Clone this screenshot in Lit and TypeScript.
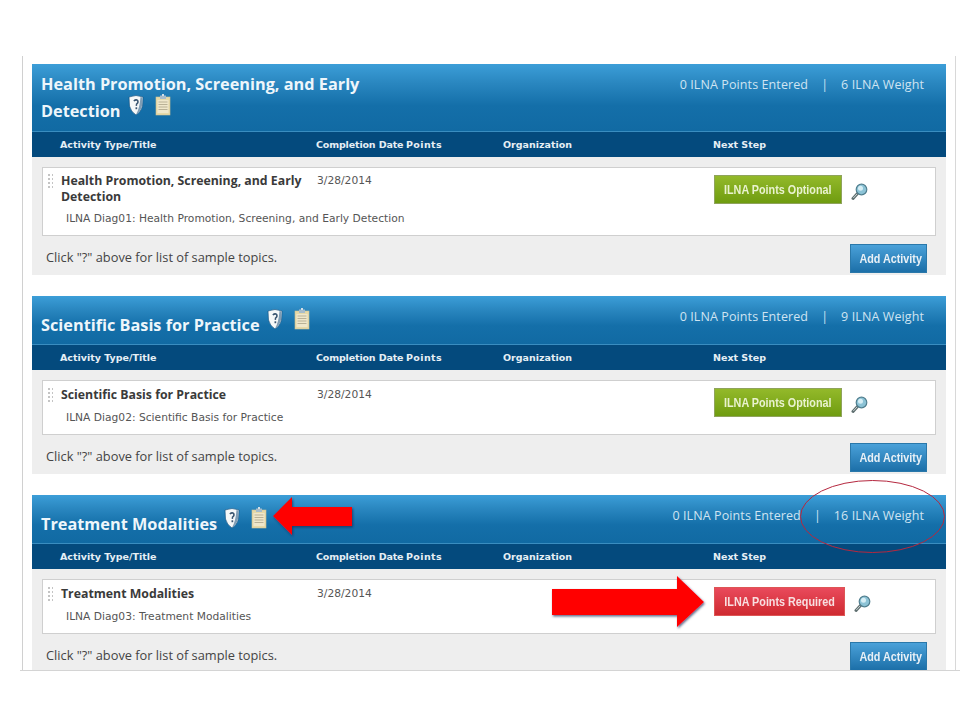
import { LitElement, html, css, svg } from "lit";
import { customElement } from "lit/decorators.js";

type Panel = {
  title: string; code: string; weight: string; multi?: boolean;
  btn: string; red?: boolean;
};

const panels: Panel[] = [
  { title: "Health Promotion, Screening, and Early Detection", code: "ILNA Diag01", weight: "6", multi: true, btn: "ILNA Points Optional" },
  { title: "Scientific Basis for Practice", code: "ILNA Diag02", weight: "9", btn: "ILNA Points Optional" },
  { title: "Treatment Modalities", code: "ILNA Diag03", weight: "16", btn: "ILNA Points Required", red: true },
];

const shield = svg`<svg class="ico" width="16" height="22" viewBox="0 0 16 22">
  <path d="M1 3 Q8 0 15 3 L14.500 12 Q13 18 8 21 Q3 18 1.500 12 Z" fill="#f6f8f8" stroke="#0d4a78" stroke-width=".6"/>
  <path d="M12.500 3 L14.500 3.500 L14 12 Q12.500 17.500 8 20.500 Q11.500 15 12.500 3 Z" fill="#7f9db5"/>
  <path d="M5.800 7 Q8 5 9.700 6.500 Q10.600 8.500 8.600 10 L8.300 11.800" fill="none" stroke="#3a5570" stroke-width="1.500"/>
  <rect x="7.500" y="13.300" width="1.700" height="1.900" fill="#3a5570"/>
</svg>`;

const clip = svg`<svg class="ico clip" width="16" height="22" viewBox="0 0 16 22">
  <rect x="1" y="3" width="14" height="18" fill="#e6d9a8" stroke="#cfc493" stroke-width=".6"/>
  <rect x="2.500" y="6" width="11" height="13" fill="#efe7cb"/>
  <path d="M3.500 8h9M3.500 10.500h9M3.500 13h9M3.500 15.500h9" stroke="#b9b196" stroke-width="1"/>
  <rect x="5" y="1.500" width="6" height="3.500" fill="#a7bccb"/>
  <rect x="7" y="0" width="2" height="2" fill="#d4dfe6"/>
</svg>`;

const lens = svg`<svg class="lens" width="17" height="18" viewBox="0 0 17 18">
  <path d="M6.500 10.500 L2 15.500" stroke="#5f6f70" stroke-width="3" stroke-linecap="round"/>
  <path d="M6 11 L2.300 15" stroke="#c9d2d2" stroke-width="1"/>
  <circle cx="10.500" cy="6.500" r="5.300" fill="#8cc3d6" stroke="#517f8f" stroke-width="1.200"/>
  <circle cx="9.500" cy="5.200" r="2.500" fill="#d6eef5"/>
</svg>`;

@customElement("app-root")
export class AppRoot extends LitElement {
  static styles = css`
    :host { display: block; width: 960px; height: 720px; background: #fff; position: relative; overflow: hidden; }
    .page { padding-top: 56px; }
    .frame {
      margin-left: 22px; width: 923px; height: 606px;
      border-left: 1px solid #d0d0d0; border-right: 1px solid #d8d8d8;
      padding: 8px 0 0 9px; overflow: hidden;
      display: flex; flex-direction: column; gap: 21px;
    }
    .rule { margin-left: 20px; height: 1px; background: #d4d4d4; }
    .panel { width: 914px; flex: none; background: #eeeeee; }
    .head {
      display: flex; justify-content: space-between; align-items: flex-start;
      background: linear-gradient(#3c9ed8 0, #2a87c0 28%, #146fa9 62%, #116aa3 100%);
      border-bottom: 1px solid #3a8dc0; box-sizing: border-box;
      height: 49px; padding: 16px 22px 0 9px; color: #fff;
    }
    .head.multi { height: 68px; padding-top: 7px; }
    .title { font: 700 16.300px/27px "Open Sans", sans-serif; color: #eef6fb; width: 345px; }
    .ico { display: inline-block; vertical-align: -1px; margin: -6px 0 -6px 7px; position: relative; top: -8px; }
    .ico.clip { margin-left: 11px; }
    .stats {
      font: 12.500px/16px "Open Sans", sans-serif; color: #cfe4f2; white-space: pre; letter-spacing: .1px;
      display: flex; gap: 13px; margin-top: -3px;
    }
    .multi .stats { margin-top: 6px; }
    .thead {
      display: grid; grid-template-columns: 256px 90px 97px 210px 1fr;
      padding: 1px 0 0 28px; box-sizing: border-box; height: 25px; align-items: center; white-space: nowrap;
      background: #044a7d; color: #e6eff5;
      font: 700 9.500px/14px "DejaVu Sans", sans-serif;
    }
    .cd { letter-spacing: -.15px; }
    .pts { letter-spacing: .4px; }
    .body { padding: 10px 10px 0 10px; }
    .card {
      background: #fff; border: 1px solid #cfcfcf; box-sizing: border-box;
      display: grid; grid-template-columns: 15px 256px 397px 1fr; grid-template-rows: auto auto;
      padding: 6px 0 8px 3px; min-height: 55px; color: #333;
    }
    .card.multi { padding-top: 5px; }
    .grip {
      grid-row: 1 / span 2; width: 6px; height: 15px;
      background-image: radial-gradient(circle, #c4c4c4 0 1px, transparent 1.200px);
      background-size: 4px 4px; margin-left: 1px;
    }
    .name { font: 700 12.300px/16px "Open Sans", sans-serif; color: #3a3a3a; padding-right: 5px; }
    .date { font: 10.700px/16px "DejaVu Sans", sans-serif; color: #555; }
    .sub {
      grid-column: 2 / span 2; grid-row: 2; margin: 6px 0 0 5px;
      font: 10.700px/16px "DejaVu Sans", sans-serif; color: #555;
    }
    .action { grid-column: 4; grid-row: 1 / span 2; display: flex; align-items: flex-start; margin-top: 1px; }
    .card.multi .action { margin-top: 2px; }
    .btn {
      width: 128px; height: 29px; box-sizing: border-box; display: flex; align-items: center; justify-content: center;
      font: 700 13px/16px "Liberation Sans", sans-serif; white-space: nowrap;
      color: #e9f2cf; border: 1px solid #8fa35c;
      background: linear-gradient(#93b92a, #6f9c10);
    }
    .btn.red { width: 131px; color: #f8dfe0; border-color: #d55; background: linear-gradient(#e94a5c, #cf2a30); }
    .narrow { display: inline-block; transform: scaleX(.83); flex: none; }
    .lens { margin: 8px 0 0 9px; }
    .foot { display: flex; justify-content: space-between; padding: 8px 9px 2px 4px; align-items: center; }
    .hint { font: 12.800px/16px "Open Sans", sans-serif; color: #444; margin-top: -3px; }
    .add {
      width: 77px; height: 29px; box-sizing: border-box; display: flex; align-items: center; justify-content: center; padding-left: 4px;
      font: 700 13px/16px "Liberation Sans", sans-serif; color: #e8f0f6; white-space: nowrap;
      border: 1px solid #2a78aa; background: linear-gradient(#4aa1d9, #1c6fa8);
    }
    .over { position: absolute; left: 0; top: 0; pointer-events: none; }
  `;

  render() {
    return html`
      <div class="page">
        <div class="frame">
          ${panels.map((p) => html`
            <section class="panel">
              <div class="head ${p.multi ? "multi" : ""}">
                <div class="title">${p.title}${shield}${clip}</div>
                <div class="stats"><span>0 ILNA Points Entered</span><span>|</span><span>${p.weight} ILNA Weight</span></div>
              </div>
              <div class="thead">
                <span>Activity Type/Title</span><span class="cd">Completion Date</span><span class="pts">Points</span><span>Organization</span><span>Next Step</span>
              </div>
              <div class="body">
                <div class="card ${p.multi ? "multi" : ""}">
                  <div class="grip"></div>
                  <div class="name">${p.title}</div>
                  <div class="date">3/28/2014</div>
                  <div class="sub">${p.code}: ${p.title}</div>
                  <div class="action">
                    <div class="btn ${p.red ? "red" : ""}"><span class="narrow">${p.btn}</span></div>${lens}
                  </div>
                </div>
                <div class="foot">
                  <span class="hint">Click "?" above for list of sample topics.</span>
                  <span class="add"><span class="narrow">Add Activity</span></span>
                </div>
              </div>
            </section>`)}
        </div>
        <div class="rule"></div>
      </div>
      <svg class="over" width="960" height="720" viewBox="0 0 960 720">
        <defs>
          <filter id="s" x="-20%" y="-20%" width="140%" height="140%">
            <feDropShadow dx="1" dy="1.500" stdDeviation="1" flood-color="#1a2a55" flood-opacity=".7"/>
          </filter>
        </defs>
        <path d="M273 516 L292 497 L292 507 L352 507 L352 526 L292 526 L292 535 Z" fill="#f00" filter="url(#s)"/>
        <path d="M552 589 L677 589 L677 576 L704 602 L677 627 L677 615 L552 615 Z" fill="#f00" filter="url(#s)"/>
        <ellipse cx="872.500" cy="516.500" rx="72" ry="36" fill="none" stroke="#b5283f" stroke-width="1"/>
      </svg>
    `;
  }
}
